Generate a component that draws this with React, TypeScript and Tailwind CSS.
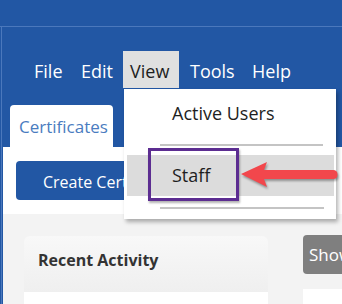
import React from "react"

const menu = [
    { label: "File", w: "w-[47px]" },
    { label: "Edit", w: "w-[49px]" },
    { label: "View", w: "w-[56px] mr-[4px]" },
    { label: "Tools", w: "w-[62px]" },
    { label: "Help", w: "w-[50px]" },
]

const Arrow = () => (
    <svg width="100" height="32" viewBox="0 0 100 32" className="drop-shadow-[1px_2px_1px_rgba(0,0,0,0.35)]">
        <path d="M1 13 L27 1 L24 9 L93 9 Q97.5 9 97.5 13.5 Q97.5 18 93 18 L24 18 L27 26 Z" fill="#f2474c" />
    </svg>
)

export default function App() {
    return (
        <div className="relative w-[342px] h-[304px] overflow-hidden bg-[#2257a4] font-['Open_Sans',sans-serif]">
            <div className="h-[27px] border-b border-[#4b78bc]" />
            <div className="flex h-[277px] overflow-hidden">
                <div className="w-px shrink-0" />
                <div className="w-px shrink-0 bg-[#4b78bc]" />
                <div className="w-px shrink-0" />
                <div className="flex-1 min-w-0 flex flex-col">
                    <div className="h-[24px]" />
                    <nav className="flex h-[37px] pl-[24px] text-[18px] text-white">
                        {menu.map((m) => (
                            <div
                                key={m.label}
                                className={
                                    m.label === "View"
                                        ? `${m.w} shrink-0 pl-[7px] pt-[3px] flex items-center bg-[#e0e0e0] text-[#1e1e1e]`
                                        : `${m.w} shrink-0 pl-[7px] pt-[3px] flex items-center`
                                }
                            >
                                {m.label}
                            </div>
                        ))}
                    </nav>
                    <div className="h-[17px]" />
                    <div className="flex h-[42px] pl-[7px]">
                        <div className="w-[103px] bg-white rounded-t-[4px] flex items-center pl-[9px] pt-[2px] text-[17px] text-[#4a7cc0]">
                            Certificates
                        </div>
                    </div>
                    <div className="h-[67px] bg-white pl-[13px] pt-[14px]">
                        <button className="h-[39px] w-[160px] rounded-[4px] bg-[#2257a4] text-white text-[16px] text-left pl-[27px] pt-[2px]">
                            Create Certificate
                        </button>
                    </div>
                    <div className="flex-1 bg-[#f3f3f3] pt-[22px] pl-[21px] flex gap-[35px] overflow-hidden">
                        <div className="w-[244px] shrink-0 flex flex-col">
                            <div className="h-[56px] rounded-t-[6px] bg-gradient-to-b from-[#f8f8f8] to-[#efefef] pl-[14px] pt-[13px] text-[16px] leading-[22px] font-bold text-[#333]">
                                Recent Activity
                            </div>
                            <div className="flex-1 bg-white" />
                        </div>
                        <div className="flex flex-col flex-1 min-w-0">
                            <button className="h-[39px] w-[60px] shrink-0 -mt-px rounded-l-[4px] bg-[#7f7f7f] text-white text-[17px] text-left pl-[6px]">
                                Show
                            </button>
                            <div className="mt-[15px] flex-1 bg-white" />
                        </div>
                    </div>
                </div>
            </div>

            <div className="absolute left-[124px] top-[89px] w-[212px] h-[130px] bg-white shadow-[2px_3px_4px_rgba(0,0,0,0.3)] flex flex-col text-[18px] text-[#1e1e1e]">
                <div className="h-[48px] pl-[48px] flex items-center">Active Users</div>
                <div className="h-[7px]" />
                <div className="ml-[36px] mr-[13px] h-[2px] bg-[#c4c4c4]" />
                <div className="h-[9px]" />
                <div className="ml-[3px] mr-[2px] h-[41px] bg-[#dcdcdc] pl-[45px] flex items-center">Staff</div>
                <div className="h-[11px]" />
                <div className="ml-[36px] mr-[12px] h-[2px] bg-[#c4c4c4]" />
            </div>
            <div className="absolute left-[148px] top-[148px] w-[91px] h-[53px] border-[3px] border-[#5c2d91] shadow-[1px_2px_2px_rgba(0,0,0,0.3)]" />
            <div className="absolute left-[240px] top-[161px]">
                <Arrow />
            </div>
        </div>
    )
}
